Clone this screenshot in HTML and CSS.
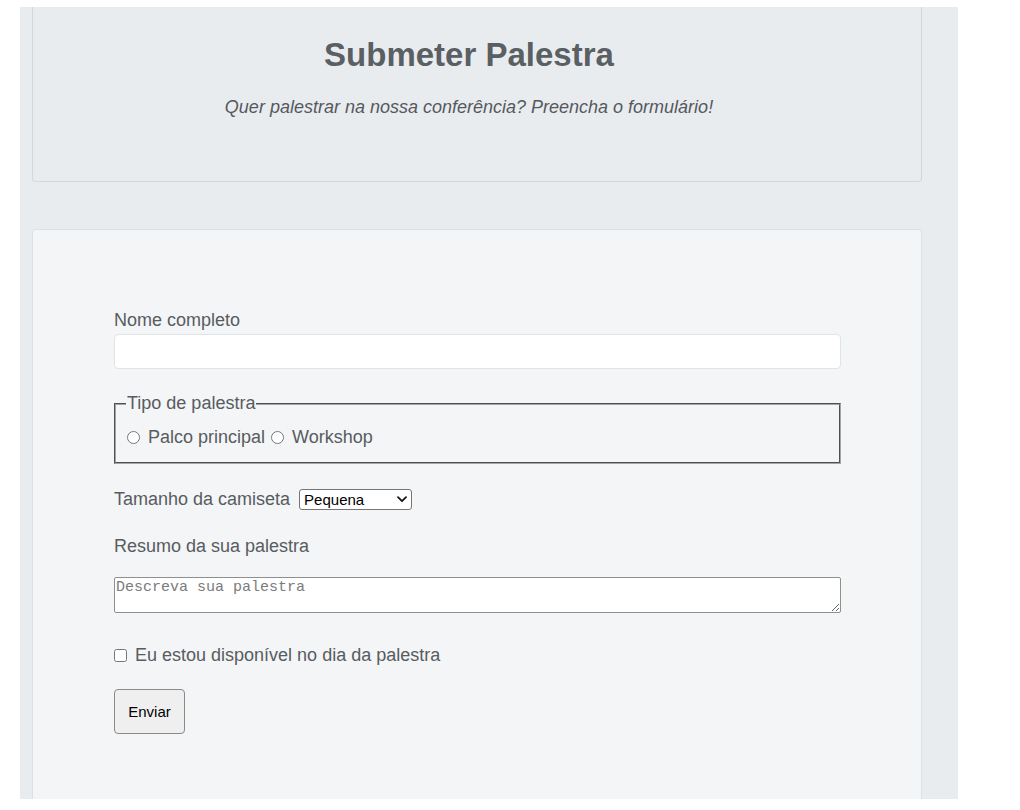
FILE: index.html
```html
<!DOCTYPE html>
<html lang="pt-BR">
<head>
<meta charset="utf-8">
<title>Submeter Palestra</title>
<link rel="stylesheet" href="styles.css">
</head>
<body>
<div class="page">
  <header class="card hero">
    <h1 class="title">Submeter Palestra</h1>
    <p class="subtitle">Quer palestrar na nossa conferência? Preencha o formulário!</p>
  </header>
  <main class="card form-card">
    <form class="form">
      <label class="label" for="nome">Nome completo</label>
      <input class="text-input" id="nome" type="text">
      <fieldset class="group">
        <legend class="legend">Tipo de palestra</legend>
        <label class="choice"><input class="radio" type="radio" name="tipo"> Palco principal</label>
        <label class="choice"><input class="radio" type="radio" name="tipo"> Workshop</label>
      </fieldset>
      <div class="row">
        <label class="label" for="tamanho">Tamanho da camiseta</label>
        <span class="select-wrap">
          <select class="select" id="tamanho">
            <option>Pequena</option>
            <option>Média</option>
            <option>Grande</option>
          </select>
          <svg class="chevron" width="10" height="7" viewBox="0 0 10 7" aria-hidden="true"><path d="M1 1.2 L5 5.2 L9 1.2" fill="none" stroke="#111" stroke-width="1.7" stroke-linecap="round" stroke-linejoin="round"/></svg>
        </span>
      </div>
      <label class="label label-resumo" for="resumo">Resumo da sua palestra</label>
      <textarea class="textarea" id="resumo" placeholder="Descreva sua palestra"></textarea>
      <label class="check-row"><input class="checkbox" type="checkbox"> Eu estou disponível no dia da palestra</label>
      <button class="button" type="submit">Enviar</button>
    </form>
  </main>
</div>
</body>
</html>
```
FILE: styles.css
```css
* {
  box-sizing: border-box;
}

body {
  margin: 0;
  background: #ffffff;
  font-family: "Liberation Sans", Arial, Helvetica, sans-serif;
  color: #575c61;
}

.page {
  margin: 7px 0 0 20px;
  width: 938px;
  height: 792px;
  padding: 0 36px 0 12px;
  background: #e9ecef;
  overflow: hidden;
  display: flex;
  flex-direction: column;
  gap: 47px;
}

.card {
  width: 890px;
  flex-shrink: 0;
  border: 1px solid #d4d7db;
  border-radius: 4px;
}

.hero {
  height: 175px;
  border-top: 0;
  border-radius: 0 0 4px 4px;
  padding-right: 16px;
  text-align: center;
  background: #e9ecef;
}

.title {
  margin: 29px 0 0;
  font-size: 33px;
  line-height: 38px;
  font-weight: bold;
  color: #5a5f63;
}

.subtitle {
  margin: 23px 0 0;
  font-size: 18px;
  line-height: 21px;
  font-style: italic;
  color: #54595e;
}

.form-card {
  height: 640px;
  background: #f4f5f7;
  border-color: #dcdfe3;
  padding: 80px 80px 0 81px;
}

.form {
  display: flex;
  flex-direction: column;
  align-items: flex-start;
  font-size: 18px;
  line-height: 21px;
}

.label {
  display: block;
}

.text-input {
  margin: 3px 0 0;
  width: 727px;
  height: 35px;
  background: #ffffff;
  border: 1px solid #e0e3e7;
  border-radius: 4px;
  padding: 0 8px;
  font: 16px "Liberation Sans", Arial, sans-serif;
}

.group {
  margin: 24px 0 0;
  width: 727px;
  min-width: 0;
  padding: 13px 10px 14px;
  border: 2px groove #a4a4a4;
}

.legend {
  padding: 0 1px;
  line-height: 21px;
}

.radio {
  margin: 3px 3px 0 1px;
  width: 13px;
  height: 13px;
  vertical-align: -1px;
}

.row {
  display: flex;
  align-items: center;
  gap: 9px;
  margin-top: 25px;
}

.select-wrap {
  position: relative;
  display: inline-block;
  height: 21px;
}

.select {
  appearance: none;
  -webkit-appearance: none;
  display: block;
  width: 113px;
  height: 21px;
  margin: 0;
  border: 1px solid #767676;
  border-radius: 3px;
  background: #ffffff;
  padding: 0 0 0 4px;
  font: 15px "Liberation Sans", Arial, sans-serif;
  color: #000000;
}

.chevron {
  position: absolute;
  right: 5px;
  top: 7px;
  pointer-events: none;
}

.label-resumo {
  margin-top: 26px;
}

.textarea {
  margin: 20px 0 0;
  width: 727px;
  height: 36px;
  border: 1px solid #8f8f8f;
  border-radius: 2px;
  padding: 1px 1px;
  background: #ffffff;
  font: 15px "Liberation Mono", "Courier New", monospace;
  line-height: 17px;
  color: #000000;
}

.textarea::placeholder {
  color: #7b7b7b;
}

.check-row {
  display: block;
  margin-top: 32px;
}

.checkbox {
  margin: 3px 3px 2px 0;
  width: 13px;
  height: 13px;
  vertical-align: -1px;
}

.button {
  margin-top: 23px;
  width: 71px;
  height: 45px;
  padding: 0;
  background: #efefef;
  border: 1px solid #8a8a8a;
  border-radius: 4px;
  font: 15px "Liberation Sans", Arial, sans-serif;
  color: #000000;
}
```
